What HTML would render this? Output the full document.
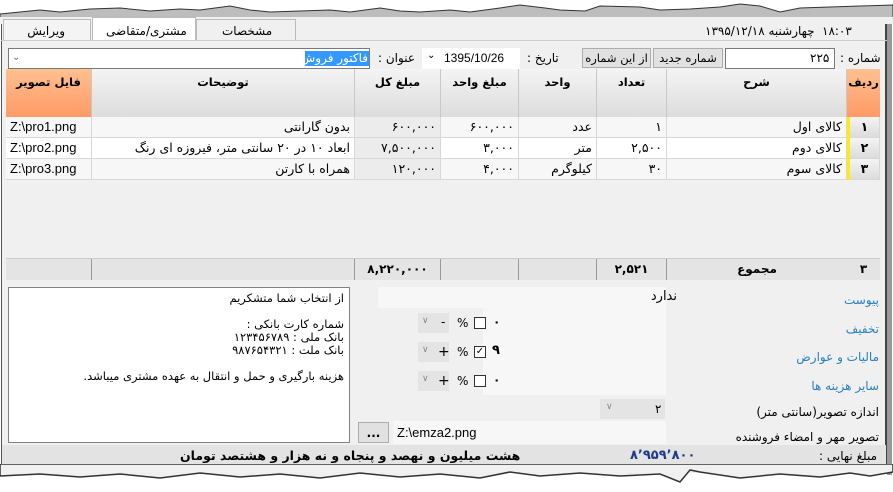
<!DOCTYPE html>
<html><head><meta charset="utf-8"><style>
*{margin:0;padding:0;box-sizing:border-box}
body{width:893px;height:492px;background:#fff;position:relative;overflow:hidden;font-family:"DejaVu Sans","Liberation Sans",sans-serif;font-size:12px;color:#000}
.a{position:absolute}
.t{position:absolute;white-space:nowrap;direction:rtl}
.l{position:absolute;white-space:nowrap;direction:ltr}
.b{font-weight:bold}
.hd{position:absolute;top:69px;height:48px;background:linear-gradient(#f4f4f4,#dcdcdc);border-right:1px solid #c8c8c8;font-weight:bold;text-align:center;padding-top:6px;font-size:11.5px}
.c{position:absolute;height:21px;border-right:1px solid #d8d8d8;border-bottom:1px solid #d8d8d8;line-height:20px;padding:0 4px;white-space:nowrap;overflow:hidden;font-size:12.5px}
.r{text-align:right;direction:rtl}
.f{position:absolute;top:259px;height:21px;background:#e4e4e4;border-right:1px solid #999;font-weight:bold;text-align:center;line-height:21px}
.lab{position:absolute;color:#2a7fc0;direction:rtl;white-space:nowrap;font-size:12px}
</style></head><body>
<div class="a" style="left:1px;top:18px;width:886px;height:455px;background:#f0f0f0;border-left:1px solid #555;border-right:2px solid #444"></div>
<div class="a" style="left:887px;top:20px;width:5px;height:455px;background:#999"></div>
<svg class="a" style="left:0;top:0" width="893" height="24"><path d="M0 24 L0 14 L20 12 L40 10 L60 12 L90 9 L120 8 L150 11 L180 9 L200 10 L230 6 L250 10 L270 12 L300 11 L330 10 L350 12 L380 8 L400 11 L420 12 L450 10 L470 12 L500 8 L520 5 L545 8 L560 10 L585 11 L600 6 L640 7 L660 10 L690 9 L720 7 L740 4 L760 6 L780 12 L800 8 L830 7 L860 6 L893 5 L893 24 Z" fill="#bdbdbd" stroke="#333" stroke-width="1"/><rect x="0" y="17" width="893" height="7" fill="#f0f0f0"/></svg>
<div class="a" style="left:3px;top:19px;width:88px;height:21px;background:#f4f4f4;border:1px solid #bbb;border-bottom:none"></div>
<div class="t" style="right:828px;top:24px">ویرایش</div>
<div class="a" style="left:92px;top:17px;width:104px;height:24px;background:#fff;border:1px solid #bbb;border-bottom:none"></div>
<div class="t" style="left:106px;top:24px;direction:rtl">مشتری/متقاضی</div>
<div class="a" style="left:196px;top:19px;width:100px;height:21px;background:#f0f0f0;border:1px solid #bbb;border-bottom:none"></div>
<div class="t" style="left:222px;top:24px">مشخصات</div>
<div class="a" style="left:1px;top:40px;width:886px;height:1px;background:#ccc"></div>
<div class="t" style="left:705px;top:24px">چهارشنبه ۱۳۹۵/۱۲/۱۸</div>
<div class="l" style="left:822px;top:24px">۱۸:۰۳</div>
<div class="t" style="left:840px;top:51px">شماره :</div>
<div class="a" style="left:725px;top:48px;width:110px;height:21px;background:#fff;border:1px solid #7a7a7a"></div>
<div class="l" style="left:810px;top:51px">۲۲۵</div>
<div class="a" style="left:653px;top:48px;width:70px;height:20px;background:#e1e1e1;border:1px solid #adadad;text-align:center;line-height:18px;direction:rtl;font-size:11.5px">شماره جدید</div>
<div class="a" style="left:582px;top:48px;width:69px;height:20px;background:#e1e1e1;border:1px solid #adadad;text-align:center;line-height:18px;direction:rtl;font-size:11.5px">از این شماره</div>
<div class="t" style="left:527px;top:51px">تاریخ :</div>
<div class="a" style="left:422px;top:48px;width:98px;height:21px;background:#fff"></div>
<div class="l" style="left:444px;top:51px;font-family:'Liberation Sans';font-size:12px">1395/10/26</div>
<div class="l" style="left:427px;top:50px;font-size:10px">&#x2304;</div>
<div class="t" style="left:378px;top:51px">عنوان :</div>
<div class="a" style="left:8px;top:48px;width:362px;height:21px;background:#fff;border:1px solid #7a7a7a"></div>
<div class="a" style="left:305px;top:51px;width:64px;height:15px;background:#3399ff"></div>
<div class="t" style="right:525px;top:51px;color:#fff">فاکتور فروش</div>
<div class="l" style="left:12px;top:52px;color:#777;font-size:10px">&#x2304;</div>
<div class="hd" style="left:6px;width:86px;background:linear-gradient(#ffc08f,#ff9a66)">فایل تصویر</div>
<div class="hd" style="left:92px;width:263px">توضیحات</div>
<div class="hd" style="left:355px;width:86px">مبلغ کل</div>
<div class="hd" style="left:441px;width:78px">مبلغ واحد</div>
<div class="hd" style="left:519px;width:78px">واحد</div>
<div class="hd" style="left:597px;width:70px">تعداد</div>
<div class="hd" style="left:667px;width:180px">شرح</div>
<div class="hd" style="left:847px;width:33px;background:linear-gradient(#ffc08f,#ff9a66);border-right:none">ردیف</div>
<div class="a" style="left:6px;top:117px;width:874px;height:63px;background:#f7f7f7"></div>
<div class="a" style="left:6px;top:138px;width:874px;height:21px;background:#fff"></div>
<div class="c" style="left:6px;top:117px;width:86px;font-family:'Liberation Sans';font-size:13px">Z:\pro1.png</div>
<div class="c" style="left:6px;top:138px;width:86px;font-family:'Liberation Sans';font-size:13px">Z:\pro2.png</div>
<div class="c" style="left:6px;top:159px;width:86px;font-family:'Liberation Sans';font-size:13px">Z:\pro3.png</div>
<div class="c r" style="left:92px;top:117px;width:263px">بدون گارانتی</div>
<div class="c r" style="left:92px;top:138px;width:263px">ابعاد ۱۰ در ۲۰ سانتی متر، فیروزه ای رنگ</div>
<div class="c r" style="left:92px;top:159px;width:263px">همراه با کارتن</div>
<div class="c r" style="left:355px;top:117px;width:86px;background:#ececec">۶۰۰,۰۰۰</div>
<div class="c r" style="left:355px;top:138px;width:86px;background:#ececec">۷,۵۰۰,۰۰۰</div>
<div class="c r" style="left:355px;top:159px;width:86px;background:#ececec">۱۲۰,۰۰۰</div>
<div class="c r" style="left:441px;top:117px;width:78px">۶۰۰,۰۰۰</div>
<div class="c r" style="left:441px;top:138px;width:78px">۳,۰۰۰</div>
<div class="c r" style="left:441px;top:159px;width:78px">۴,۰۰۰</div>
<div class="c r" style="left:519px;top:117px;width:78px">عدد</div>
<div class="c r" style="left:519px;top:138px;width:78px">متر</div>
<div class="c r" style="left:519px;top:159px;width:78px">کیلوگرم</div>
<div class="c r" style="left:597px;top:117px;width:70px">۱</div>
<div class="c r" style="left:597px;top:138px;width:70px">۲,۵۰۰</div>
<div class="c r" style="left:597px;top:159px;width:70px">۳۰</div>
<div class="c r" style="left:667px;top:117px;width:180px">کالای اول</div>
<div class="c r" style="left:667px;top:138px;width:180px">کالای دوم</div>
<div class="c r" style="left:667px;top:159px;width:180px">کالای سوم</div>
<div class="a" style="left:847px;top:117px;width:3px;height:63px;background:#ffee00"></div>
<div class="c b" style="left:850px;top:117px;width:30px;background:linear-gradient(#f4f4f4,#dcdcdc);text-align:center">۱</div>
<div class="c b" style="left:850px;top:138px;width:30px;background:linear-gradient(#f4f4f4,#dcdcdc);text-align:center">۲</div>
<div class="c b" style="left:850px;top:159px;width:30px;background:linear-gradient(#f4f4f4,#dcdcdc);text-align:center">۳</div>
<div class="a" style="left:6px;top:258px;width:874px;height:1px;background:#ccc"></div>
<div class="f" style="left:6px;width:86px"></div>
<div class="f" style="left:92px;width:263px"></div>
<div class="f" style="left:355px;width:86px">۸,۲۲۰,۰۰۰</div>
<div class="f" style="left:441px;width:78px"></div>
<div class="f" style="left:519px;width:78px"></div>
<div class="f" style="left:597px;width:70px">۲,۵۲۱</div>
<div class="f" style="left:667px;width:180px;border-right:none">مجموع</div>
<div class="f" style="left:847px;width:33px;border-right:none">۳</div>
<div class="a" style="left:8px;top:287px;width:342px;height:156px;background:#fff;border:1px solid #828282"></div>
<div class="t" style="right:549px;top:292px;line-height:13px;font-size:11.5px">از انتخاب شما متشکریم<br><br>شماره کارت بانکی :<br>بانک ملی : ۱۲۳۴۵۶۷۸۹<br>بانک ملت : ۹۸۷۶۵۴۳۲۱<br><br>هزینه بارگیری و حمل و انتقال به عهده مشتری میباشد.</div>
<div class="a" style="left:378px;top:287px;width:288px;height:21px;background:#f7f7f7"></div>
<div class="t" style="right:216px;top:289px;font-size:13px">ندارد</div>
<div class="a" style="left:483px;top:308px;width:183px;height:87px;background:#f7f7f7"></div>
<div class="lab" style="right:14px;top:293px">پیوست</div>
<div class="lab" style="right:14px;top:322px">تخفیف</div>
<div class="lab" style="right:14px;top:350px">مالیات و عوارض</div>
<div class="lab" style="right:14px;top:379px">سایر هزینه ها</div>
<div class="t" style="right:14px;top:405px;font-size:12px">اندازه تصویر(سانتی متر)</div>
<div class="t" style="right:14px;top:430px;font-size:12px">تصویر مهر و امضاء فروشنده</div>
<div class="a" style="left:418px;top:313px;width:31px;height:20px;background:#e4e4e4"></div>
<div class="a" style="left:418px;top:342px;width:31px;height:20px;background:#e4e4e4"></div>
<div class="a" style="left:418px;top:371px;width:31px;height:20px;background:#e4e4e4"></div>
<div class="l" style="left:422px;top:316px;color:#888;font-size:9px">&#x2228;</div>
<div class="l" style="left:422px;top:345px;color:#888;font-size:9px">&#x2228;</div>
<div class="l" style="left:422px;top:374px;color:#888;font-size:9px">&#x2228;</div>
<div class="l" style="left:441px;top:315px;font-size:12px">-</div>
<div class="l" style="left:438px;top:344px;font-size:14px">+</div>
<div class="l" style="left:438px;top:373px;font-size:14px">+</div>
<div class="l" style="left:457px;top:316px;font-size:12px">%</div>
<div class="l" style="left:457px;top:345px;font-size:12px">%</div>
<div class="l" style="left:457px;top:374px;font-size:12px">%</div>
<div class="a" style="left:474px;top:317px;width:12px;height:12px;border:1px solid #333;background:#fff"></div>
<div class="a" style="left:474px;top:346px;width:12px;height:12px;border:1px solid #333;background:#fff;font-size:10px;line-height:10px;text-align:center">&#x2713;</div>
<div class="a" style="left:474px;top:375px;width:12px;height:12px;border:1px solid #333;background:#fff"></div>
<div class="l b" style="left:493px;top:315px">۰</div>
<div class="l b" style="left:492px;top:343px;font-size:13px">۹</div>
<div class="l b" style="left:493px;top:373px">۰</div>
<div class="a" style="left:600px;top:399px;width:65px;height:20px;background:#e4e4e4"></div>
<div class="l" style="left:606px;top:402px;color:#888;font-size:9px">&#x2228;</div>
<div class="l" style="left:655px;top:402px;font-size:12px">۲</div>
<div class="a" style="left:358px;top:422px;width:31px;height:21px;background:#e1e1e1;border:1px solid #adadad;text-align:center;font-weight:bold;line-height:20px">...</div>
<div class="a" style="left:393px;top:421px;width:273px;height:23px;background:#f7f7f7"></div>
<div class="l" style="left:397px;top:425px;font-family:'Liberation Sans';font-size:13px">Z:\emza2.png</div>
<div class="a" style="left:2px;top:445px;width:884px;height:21px;background:#e3e3e3"></div>
<div class="t" style="right:16px;top:449px;font-size:12px">مبلغ نهایی :</div>
<div class="l b" style="left:630px;top:448px;color:#1f3a8a;font-size:13px">۸٬۹۵۹٬۸۰۰</div>
<div class="t b" style="left:180px;top:448px;font-size:12.5px">هشت میلیون و نهصد و پنجاه و نه هزار و هشتصد تومان</div>
<svg class="a" style="left:0;top:464px" width="893" height="28"><path d="M0 0 L893 0 L893 8 L870 12 L850 9 L820 13 L780 10 L740 14 L700 8 L690 6 L680 18 L660 10 L620 12 L580 9 L540 12 L510 8 L480 14 L440 10 L400 13 L360 9 L320 14 L280 10 L240 13 L200 9 L160 14 L120 10 L80 13 L40 10 L0 12 Z" fill="#f0f0f0" stroke="#333" stroke-width="1.5"/></svg>
</body></html>
